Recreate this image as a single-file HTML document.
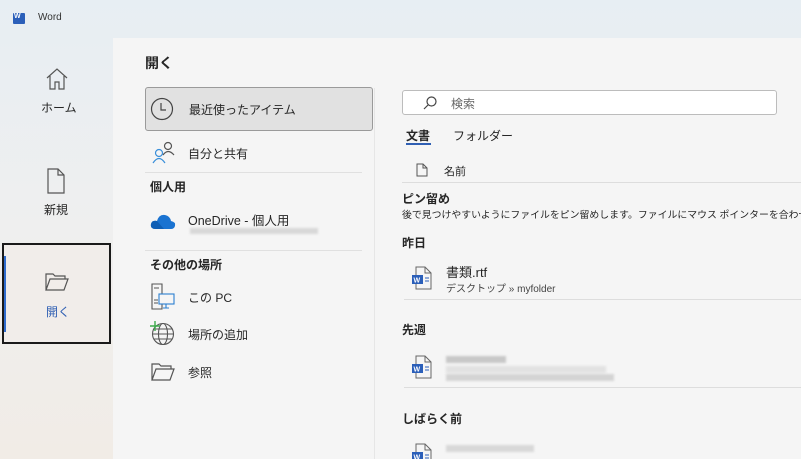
<!DOCTYPE html>
<html style="width:801px;height:459px;overflow:hidden"><head><meta charset="utf-8"><style>
*{margin:0;padding:0;box-sizing:border-box}
body{width:801px;height:459px;overflow:hidden;position:relative;font-family:"Liberation Sans","Noto Sans CJK JP",sans-serif;color:#262626;background:linear-gradient(180deg,#e7eef3 0%,#efefef 50%,#f1ece6 100%)}
.a{position:absolute}
.t{font-size:12px;white-space:nowrap}
.b{font-weight:bold}
.blur{background:#d8d8d8;height:7px;position:absolute;filter:blur(1px)}
</style></head><body>
<div class="a" style="left:13px;top:13px;width:12px;height:11px;background:#2b5fb9;border-radius:1px"></div>
<div class="a t" style="left:14px;top:13px;font-size:7px;color:#fff;font-weight:bold">W</div>
<div class="a t" style="left:38px;top:12px;font-size:10px;color:#333">Word</div>

<div class="a" style="left:113px;top:38px;width:688px;height:421px;background:#f5f5f5;overflow:hidden">
</div>
<div class="a" style="left:374px;top:88px;width:1px;height:371px;background:#e6e6e6"></div>

<svg class="a" style="left:44px;top:66px" width="26" height="26" viewBox="0 0 26 26" fill="none" stroke="#555" stroke-width="1.2"><path d="M3 12 L13 3 L23 12 M6 10 V23 H11 V16 H15 V23 H20 V10"/></svg>
<div class="a t" style="left:41px;top:99px;font-size:12px">ホーム</div>
<svg class="a" style="left:46px;top:168px" width="20" height="26" viewBox="0 0 20 26" fill="none" stroke="#555" stroke-width="1.2"><path d="M2 1 H12 L18 7 V25 H2 Z M12 1 V7 H18"/></svg>
<div class="a t" style="left:44px;top:201px">新規</div>
<div class="a" style="left:2px;top:243px;width:109px;height:101px;border:2px solid #1a1a1a;background:#f1edea"></div>
<div class="a" style="left:4px;top:256px;width:2px;height:76px;background:#2f6ccf"></div>
<svg class="a" style="left:44px;top:272px" width="26" height="20" viewBox="0 0 26 20" fill="none" stroke="#555" stroke-width="1.2"><path d="M2 18 V2 H9 L11 4 H21 V7 M2 18 L6 7 H24 L20 18 Z"/></svg>
<div class="a t" style="left:46px;top:303px;color:#2f5fb3">開く</div>

<div class="a t b" style="left:145px;top:53px;font-size:14px">開く</div>
<div class="a" style="left:145px;top:87px;width:228px;height:44px;background:#e1e1e1;border:1px solid #9a9a9a;border-radius:3px"></div>
<svg class="a" style="left:150px;top:97px" width="24" height="24" viewBox="0 0 24 24" fill="none" stroke="#444" stroke-width="1.2"><circle cx="12" cy="12" r="10.5"/><path d="M11 6 V13 H16"/></svg>
<div class="a t" style="left:189px;top:101px">最近使ったアイテム</div>
<svg class="a" style="left:150px;top:140px" width="26" height="24" viewBox="0 0 26 24" fill="none" stroke-width="1.2"><circle cx="9" cy="13" r="3.5" stroke="#3a8fd9"/><path d="M3 23 Q9 14 15 23" stroke="#3a8fd9"/><circle cx="18" cy="6" r="3.5" stroke="#555"/><path d="M13 15 Q18 8 24 15" stroke="#555"/></svg>
<div class="a t" style="left:188px;top:145px">自分と共有</div>
<div class="a" style="left:145px;top:172px;width:217px;height:1px;background:#e0e0e0"></div>
<div class="a t b" style="left:150px;top:178px">個人用</div>
<svg class="a" style="left:150px;top:212px" width="26" height="18" viewBox="0 0 26 18"><path d="M6 17 Q0 17 1 12 Q2 8 7 9 Q9 2 15 3 Q20 4 21 9 Q26 10 25 14 Q24 17 21 17 Z" fill="#1a73d1"/><path d="M6 17 Q0 17 1 12 Q2 8 7 9 L14 17Z" fill="#0f5fb5"/></svg>
<div class="a t" style="left:188px;top:210px;font-size:12.5px">OneDrive - 個人用</div>
<div class="blur" style="left:190px;top:228px;width:128px;height:6px"></div>
<div class="a" style="left:145px;top:250px;width:217px;height:1px;background:#e0e0e0"></div>
<div class="a t b" style="left:150px;top:256px">その他の場所</div>
<svg class="a" style="left:150px;top:283px" width="26" height="28" viewBox="0 0 26 28" fill="none" stroke-width="1.1"><path d="M2 1 H12 V26 H2 Z M4 5 H9 M4 17 H8 M4 20 H8" stroke="#555"/><rect x="9" y="11" width="15" height="10" fill="#f5f5f5" stroke="#2a7fd0"/><path d="M16 21 V25 M13 25 H19" stroke="#2a7fd0"/></svg>
<div class="a t" style="left:188px;top:289px">この PC</div>
<svg class="a" style="left:148px;top:320px" width="28" height="26" viewBox="0 0 28 26" fill="none" stroke-width="1.1"><circle cx="15" cy="14" r="10.5" stroke="#555"/><ellipse cx="15" cy="14" rx="4.5" ry="10.5" stroke="#555"/><path d="M4.5 14 H25.5 M6 9 H24 M6 19 H24" stroke="#555"/><path d="M7 1 V11 M2 6 H12" stroke="#3cab4b" stroke-width="1.4"/></svg>
<div class="a t" style="left:188px;top:326px">場所の追加</div>
<svg class="a" style="left:150px;top:362px" width="26" height="20" viewBox="0 0 26 20" fill="none" stroke="#555" stroke-width="1.2"><path d="M2 18 V2 H9 L11 4 H21 V7 M2 18 L6 7 H24 L20 18 Z"/></svg>
<div class="a t" style="left:188px;top:364px">参照</div>

<div class="a" style="left:402px;top:90px;width:375px;height:25px;background:#fff;border:1px solid #bcbcbc;border-radius:3px"></div>
<svg class="a" style="left:422px;top:95px" width="16" height="16" viewBox="0 0 16 16" fill="none" stroke="#444" stroke-width="1.2"><circle cx="9.5" cy="6.5" r="4.5"/><path d="M6 10 L2 14"/></svg>
<div class="a t" style="left:451px;top:95px;color:#666">検索</div>
<div class="a t b" style="left:406px;top:127px">文書</div>
<div class="a" style="left:406px;top:143px;width:25px;height:2px;background:#2f5fb3"></div>
<div class="a t" style="left:453px;top:127px">フォルダー</div>
<svg class="a" style="left:416px;top:163px" width="12" height="14" viewBox="0 0 12 14" fill="none" stroke="#555" stroke-width="1"><path d="M1 1 H7 L11 5 V13 H1 Z M7 1 V5 H11"/></svg>
<div class="a t" style="left:444px;top:163px;font-size:11px">名前</div>
<div class="a" style="left:402px;top:182px;width:399px;height:1px;background:#ddd"></div>
<div class="a t b" style="left:402px;top:190px">ピン留め</div>
<div class="a" style="left:402px;top:207px;width:399px;height:14px;overflow:hidden"><div class="t" style="font-size:9.9px">後で見つけやすいようにファイルをピン留めします。ファイルにマウス ポインターを合わせたときに表示されるピンの</div></div>
<div class="a t b" style="left:402px;top:234px">昨日</div>
<svg class="a" style="left:411px;top:266px" width="22" height="24" viewBox="0 0 22 24" fill="none"><path d="M5 1 H14 L20 7 V23 H5 Z M14 1 V7 H20" stroke="#666" stroke-width="1"/><rect x="1" y="9" width="11" height="9" fill="#2b5fb9"/><text x="2.5" y="16.5" font-size="7" font-weight="bold" fill="#fff" font-family="Liberation Sans">W</text><path d="M14 12 H18 M14 15 H18" stroke="#2b5fb9"/></svg>
<div class="a t" style="left:446px;top:262px;font-size:13px">書類.rtf</div>
<div class="a t" style="left:446px;top:280px;font-size:10px;color:#444">デスクトップ » myfolder</div>
<div class="a" style="left:404px;top:299px;width:397px;height:1px;background:#ddd"></div>
<div class="a t b" style="left:402px;top:321px">先週</div>
<svg class="a" style="left:411px;top:355px" width="22" height="24" viewBox="0 0 22 24" fill="none"><path d="M5 1 H14 L20 7 V23 H5 Z M14 1 V7 H20" stroke="#666" stroke-width="1"/><rect x="1" y="9" width="11" height="9" fill="#2b5fb9"/><text x="2.5" y="16.5" font-size="7" font-weight="bold" fill="#fff" font-family="Liberation Sans">W</text><path d="M14 12 H18 M14 15 H18" stroke="#2b5fb9"/></svg>
<div class="blur" style="left:446px;top:356px;width:60px;background:#c8c8c8"></div>
<div class="blur" style="left:446px;top:366px;width:160px;background:#e2e2e2"></div>
<div class="blur" style="left:446px;top:374px;width:168px;background:#d4d4d4"></div>
<div class="a" style="left:404px;top:387px;width:397px;height:1px;background:#ddd"></div>
<div class="a t b" style="left:402px;top:410px">しばらく前</div>
<div class="a" style="left:411px;top:443px;width:22px;height:16px;overflow:hidden"><svg width="22" height="24" viewBox="0 0 22 24" fill="none"><path d="M5 1 H14 L20 7 V23 H5 Z M14 1 V7 H20" stroke="#666" stroke-width="1"/><rect x="1" y="9" width="11" height="9" fill="#2b5fb9"/><text x="2.5" y="16.5" font-size="7" font-weight="bold" fill="#fff" font-family="Liberation Sans">W</text><path d="M14 12 H18 M14 15 H18" stroke="#2b5fb9"/></svg></div>
<div class="blur" style="left:446px;top:445px;width:88px;background:#d8d8d8"></div>
</body></html>
